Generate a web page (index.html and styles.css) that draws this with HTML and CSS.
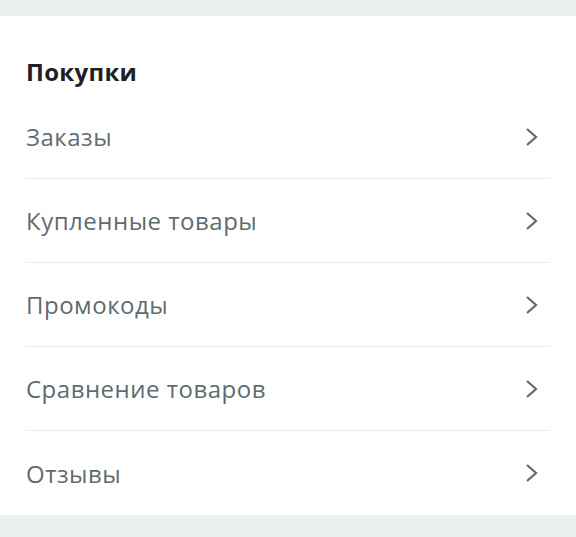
FILE: index.html
```html
<!DOCTYPE html>
<html lang="ru">
<head>
    <meta charset="UTF-8">
    <meta name="viewport" content="width=device-width, initial-scale=1.0">
    <title>Покупки</title>
    <link rel="stylesheet" href="styles.css">
</head>
<body>
    <div class="section">
        <h2>Покупки</h2>

        <!-- Menu list -->
        <ul class="menu">
            <li class="menu-item">
                <span>Заказы</span>
                <svg class="chevron" viewBox="0 0 16 20"><path d="M3 2l9 8-9 8"/></svg>
            </li>
            <li class="menu-item">
                <span>Купленные товары</span>
                <svg class="chevron" viewBox="0 0 16 20"><path d="M3 2l9 8-9 8"/></svg>
            </li>
            <li class="menu-item">
                <span>Промокоды</span>
                <svg class="chevron" viewBox="0 0 16 20"><path d="M3 2l9 8-9 8"/></svg>
            </li>
            <li class="menu-item">
                <span>Сравнение товаров</span>
                <svg class="chevron" viewBox="0 0 16 20"><path d="M3 2l9 8-9 8"/></svg>
            </li>
            <li class="menu-item">
                <span>Отзывы</span>
                <svg class="chevron" viewBox="0 0 16 20"><path d="M3 2l9 8-9 8"/></svg>
            </li>
        </ul>
    </div>
</body>
</html>
```

FILE: styles.css
```css
body {
    font-family: "Open Sans", "Noto Sans", sans-serif;
    margin: 0;
    background-color: #eceff0;
    height: 537px;
    overflow: hidden;
}
.section {
    background-color: white;
    margin-top: 16px;
    padding: 41px 26px 0 25px;
}
h2 {
    margin: 0 0 8px 1px;
    font-size: 24px;
    line-height: 30px;
    font-weight: 700;
    letter-spacing: 0.3px;
    color: #1e2124;
}
.menu {
    list-style: none;
    margin: 0;
    padding: 0;
}
.menu-item {
    display: flex;
    justify-content: space-between;
    align-items: center;
    height: 83px;
    border-bottom: 1px solid #e8eaeb;
    padding: 0 10px 0 1px;
    font-size: 24px;
    letter-spacing: 0.5px;
    color: #5f6b71;
}
.menu-item:last-child {
    border-bottom: none;
    height: 84px;
}
.chevron {
    width: 16px;
    height: 20px;
    fill: none;
    stroke: #5f6b71;
    stroke-width: 2.2;
}
```
